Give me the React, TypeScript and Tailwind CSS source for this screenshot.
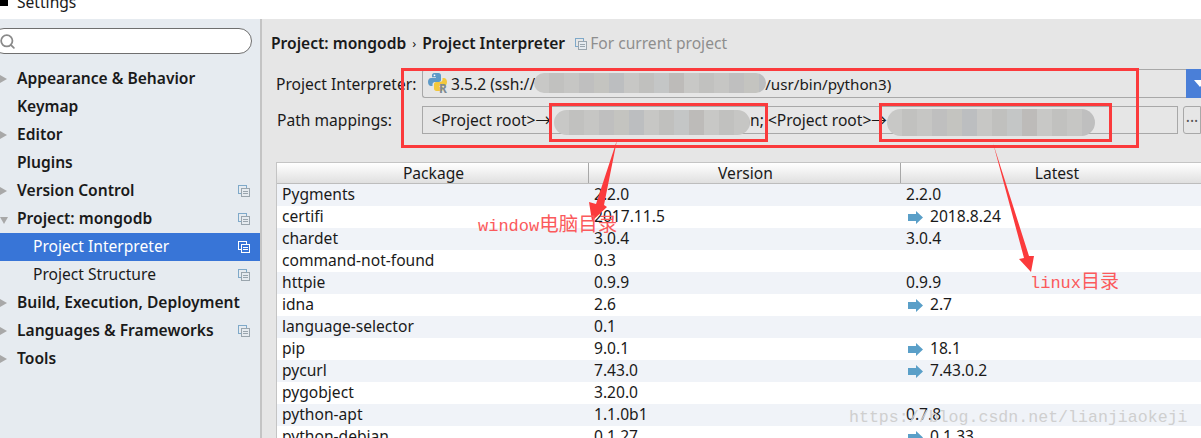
import { Search } from 'lucide-react'

const font = { fontFamily: '"Noto Sans", "Noto Sans CJK SC", sans-serif' }
const markFont = { fontFamily: '"Liberation Mono", "Noto Sans CJK SC", monospace' }

const nav = [
  { label: 'Appearance & Behavior', bold: true, arrow: 'right' },
  { label: 'Keymap', bold: true },
  { label: 'Editor', bold: true, arrow: 'right' },
  { label: 'Plugins', bold: true },
  { label: 'Version Control', bold: true, arrow: 'right', copy: true },
  { label: 'Project: mongodb', bold: true, arrow: 'down', copy: true },
  { label: 'Project Interpreter', active: true, copy: true },
  { label: 'Project Structure', copy: true },
  { label: 'Build, Execution, Deployment', bold: true, arrow: 'right' },
  { label: 'Languages & Frameworks', bold: true, arrow: 'right', copy: true },
  { label: 'Tools', bold: true, arrow: 'right' },
]

const packages = [
  ['Pygments', '2.2.0', '2.2.0', false],
  ['certifi', '2017.11.5', '2018.8.24', true],
  ['chardet', '3.0.4', '3.0.4', false],
  ['command-not-found', '0.3', '', false],
  ['httpie', '0.9.9', '0.9.9', false],
  ['idna', '2.6', '2.7', true],
  ['language-selector', '0.1', '', false],
  ['pip', '9.0.1', '18.1', true],
  ['pycurl', '7.43.0', '7.43.0.2', true],
  ['pygobject', '3.20.0', '', false],
  ['python-apt', '1.1.0b1', '0.7.8', false],
  ['python-debian', '0.1.27', '0.1.33', true],
] as const

const mosaic = ['#c8c8c6', '#c1c1bf', '#c6c6c4', '#bfbfbf', '#c4c4c0', '#bcbec0', '#c7c7c5', '#c0c0be', '#c4c6c6', '#bdbbb9']

function CopyIcon({ light }: { light?: boolean }) {
  return (
    <svg width="12" height="12" viewBox="0 0 12 12" className="shrink-0">
      <rect x="0.5" y="0.5" width="8" height="8" fill="none" stroke={light ? '#ffffff' : '#7fa9c9'} />
      <rect x="3.5" y="3.5" width="8" height="8" fill={light ? '#3875d7' : '#e6ebf0'} stroke={light ? '#ffffff' : '#9aa5ad'} />
      <path d="M5 6.500h5M5 8.500h5" stroke={light ? '#ffffff' : '#9aa5ad'} />
    </svg>
  )
}

function TreeArrow({ dir }: { dir?: string }) {
  if (dir === 'right') return <span className="absolute left-0 top-[10px] border-y-[4px] border-l-[7px] border-y-transparent border-l-[#a8a8a8]" />
  if (dir === 'down') return <span className="absolute left-0 top-[12px] border-x-[4px] border-t-[7px] border-x-transparent border-t-[#a8a8a8]" />
  return null
}

function UpdateArrow() {
  return (
    <svg width="15" height="13" viewBox="0 0 15 13" className="ml-[2px] shrink-0">
      <path d="M0 3h8V0l7 6.500-7 6.500v-3H0z" fill="#5a9fc8" />
    </svg>
  )
}

function PythonIcon() {
  const snake = 'M6 0h4.500C12 0 13 1 13 2.500V7c0 1-1 2-2 2H7C5.500 9 4.500 10 4.500 11.500V13H3c-1.500 0-3-1.500-3-4s1.500-4 3-4h5V4.200H4V2c0-1 1-2 2-2z'
  return (
    <svg width="20" height="21" viewBox="0 0 20 21" className="shrink-0">
      <path d={snake} fill="#5d9ac8" />
      <path d={snake} fill="#f2c83c" transform="rotate(180 9.500 9)" />
      <circle cx="6.500" cy="2.300" r="0.900" fill="#ffffff" />
      <text x="11" y="20" fontSize="12" fontWeight="700" fill="#7d8a94">R</text>
    </svg>
  )
}

function Smear({ className }: { className: string }) {
  return (
    <div className={`absolute flex overflow-hidden rounded-full blur-[0.6px] ${className}`}>
      {[...mosaic, ...mosaic].map((color, i) => (
        <div key={i} className="h-full w-[15px] shrink-0" style={{ backgroundColor: color }} />
      ))}
    </div>
  )
}

export default function App() {
  return (
    <div className="relative flex h-[438px] w-[1201px] flex-col overflow-hidden bg-white text-[15.6px] text-[#1a1a1a]" style={font}>
      <div className="flex h-[19px] shrink-0 items-start overflow-hidden">
        <span className="h-[6px] w-[8px] shrink-0 bg-black" />
        <span className="ml-[9px] -mt-[7px] leading-[18px]">Settings</span>
      </div>

      <div className="flex min-h-0 flex-1">
        <aside className="flex w-[262px] shrink-0 flex-col border-r-2 border-[#c4c4c4] bg-[#e6ebf0]">
          <div className="mt-[9px] flex h-[26px] w-[261px] -ml-[9px] items-center rounded-[13px] border border-[#6f6f6f] bg-white pl-[7px]">
            <Search size={17} strokeWidth={2.5} className="text-[#8a8a8a]" />
          </div>
          <nav className="mt-[11px] flex flex-col">
            {nav.map((item) => (
              <div
                key={item.label}
                className={`relative flex h-[28px] items-center justify-between pr-[10px] ${item.active ? 'bg-[#3875d7] text-white' : ''}`}
              >
                <TreeArrow dir={item.arrow} />
                <span className={item.bold ? 'pl-[17px] font-semibold' : 'pl-[33px]'}>{item.label}</span>
                {item.copy && <CopyIcon light={item.active} />}
              </div>
            ))}
          </nav>
        </aside>

        <main className="flex min-w-0 flex-1 flex-col bg-[#e6e6e6]">
          <div className="ml-[9px] mt-[13px] flex h-[22px] items-center whitespace-nowrap pt-[2px]">
            <span className="font-semibold">Project: mongodb</span>
            <span className="mx-[6px] text-[13px]">›</span>
            <span className="font-semibold">Project Interpreter</span>
            <span className="ml-[10px] mr-[3px]"><CopyIcon /></span>
            <span className="text-[#8e8e8e]">For current project</span>
          </div>

          <div className="ml-[14px] mt-[15px] flex h-[29px] items-center">
            <span className="w-[146px] shrink-0 pt-[2px]">Project Interpreter:</span>
            <div className="flex h-[29px] flex-1 items-center justify-between rounded-l-[3px] border border-[#a8a8a8] border-r-0">
              <div className="flex items-center gap-[3px] pl-[5px]">
                <PythonIcon />
                <span className="pt-[2px]">3.5.2 (ssh://</span>
                <span className="ml-[227px] pt-[2px] text-[15.2px]">/usr/bin/python3)</span>
              </div>
              <div className="flex h-[29px] w-[15px] items-center bg-[#4a7fd8] pl-[8px]">
                <span className="shrink-0 border-x-[6px] border-t-[7px] border-x-transparent border-t-white" />
              </div>
            </div>
          </div>

          <div className="ml-[15px] mt-[8px] flex h-[28px] items-center">
            <span className="w-[145px] shrink-0 pt-[2px]">Path mappings:</span>
            <div className="flex h-[28px] w-[756px] shrink-0 items-center gap-[4px] whitespace-nowrap border border-[#a8a8a8] pt-[2px] pl-[9px]">
              <span>&lt;Project root&gt;→</span>
              <span className="ml-[195px]">n;</span>
              <span>&lt;Project root&gt;→</span>
            </div>
            <div className="ml-[5px] flex h-[28px] flex-1 items-center justify-center rounded-l-[3px] border border-[#a8a8a8] pb-[6px] text-[#555]">...</div>
          </div>

          <div className="ml-[14px] mt-[28px] flex min-h-0 flex-1 flex-col overflow-hidden border-t border-l border-[#c4c4c4] bg-white">
            <div className="flex h-[21px] shrink-0 border-b border-[#bdbdbd] bg-gradient-to-b from-white to-[#e0e0e0]">
              <div className="w-[312px] border-r border-[#a8a8a8] pl-[2px] text-center leading-[20px]">Package</div>
              <div className="w-[312px] border-r border-[#a8a8a8] pl-[2px] text-center leading-[20px]">Version</div>
              <div className="flex-1 pl-[12px] text-center leading-[20px]">Latest</div>
            </div>
            {packages.map(([name, version, latest, update], i) => (
              <div key={name} className={`flex h-[22px] shrink-0 items-center ${i % 2 === 0 ? 'bg-[#f0f3f8]' : 'bg-white'}`}>
                <span className="w-[312px] pl-[5px]">{name}</span>
                <span className="w-[312px] pl-[5px]">{version}</span>
                <span className="flex items-center gap-[7px] pl-[5px]">
                  {update && <UpdateArrow />}
                  {latest}
                </span>
              </div>
            ))}
          </div>
        </main>
      </div>

      {/* blurred out host names, drawn over the form */}
      <Smear className="left-[534px] top-[73px] h-[20px] w-[232px]" />
      <Smear className="left-[554px] top-[110px] h-[25px] w-[196px]" />
      <Smear className="left-[887px] top-[109px] h-[27px] w-[208px]" />

      {/* red markup from the person who took the screenshot */}
      <div className="absolute left-[401px] top-[68px] h-[80px] w-[738px] border-[3px] border-[#fb3a3c]" />
      <div className="absolute left-[549px] top-[103px] h-[39px] w-[219px] border-[3px] border-[#fb3a3c]" />
      <div className="absolute left-[879px] top-[103px] h-[39px] w-[233px] border-[3px] border-[#fb3a3c]" />
      <svg width="1201" height="438" className="absolute left-0 top-0">
        <path d="M617 140 L604 205 L607 207 L592 221 L589 202 L596 204 Z" fill="#fb3a3c" />
        <path d="M993 143 L1029 256 L1034 256 L1031 272 L1019 259 L1024 258 Z" fill="#fb3a3c" />
      </svg>
      <span className="absolute left-[478px] top-[215px] whitespace-nowrap text-[17px] leading-[22px] text-[#fb5a5c]" style={markFont}>
        window<span className="text-[19.5px]">电脑目录</span>
      </span>
      <span className="absolute left-[1030px] top-[272px] whitespace-nowrap text-[17px] leading-[22px] text-[#fb5a5c]" style={markFont}>
        linux<span className="text-[19px]">目录</span>
      </span>
      <span className="absolute left-[849px] top-[407px] whitespace-nowrap text-[16.6px] leading-[22px] text-[#cfcfcf]" style={markFont}>https://blog.csdn.net/lianjiaokeji</span>
    </div>
  )
}
